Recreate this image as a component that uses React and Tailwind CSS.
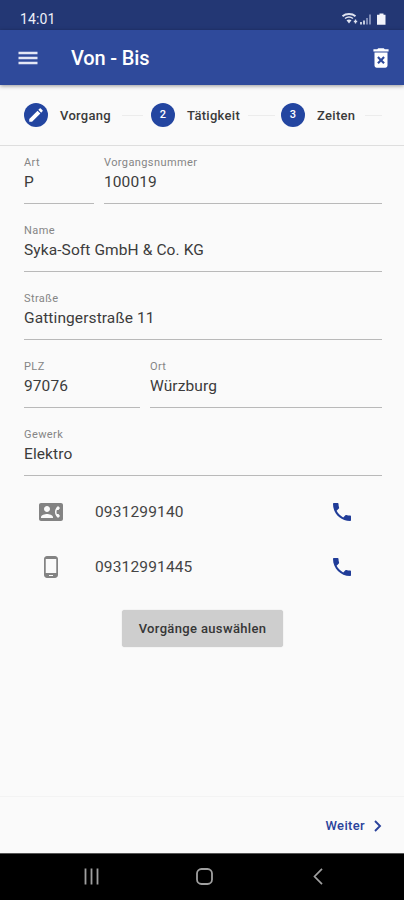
import React from "react";
import {
  MdDeleteForever,
  MdEdit,
  MdContactPhone,
  MdPhoneAndroid,
  MdPhone,
} from "react-icons/md";

function StatusBar() {
  return (
    <div className="flex h-[30px] items-center justify-between bg-[#233774] pl-5 pr-[17px] pt-[7px] text-white">
      <span className="text-[14px] leading-4 tracking-[0.1px] text-[#eef0f8]">14:01</span>
      <svg width="46" height="14" viewBox="0 0 46 14" fill="none">
        <path d="M1.500 4.200C5 1.200 11 1.200 14.500 4.200" stroke="#dfe3f0" strokeWidth="1.900" />
        <path d="M4 6.500C6.400 4.600 9.600 4.600 12 6.500" stroke="#dfe3f0" strokeWidth="1.500" />
        <path d="M5.500 8.200C7 7.200 9 7.200 10.500 8.200L8 11.500Z" fill="#dfe3f0" />
        <path d="M14.500 7.500v4M12.800 9.500h3.400" stroke="#dfe3f0" strokeWidth="1.300" />
        <path d="M20 12.500v-2.500M23 12.500V8.500" stroke="#dfe3f0" strokeWidth="1.700" />
        <path d="M26 12.500V6M29 12.500V2.500" stroke="#8d99c1" strokeWidth="1.700" />
        <path d="M38.500 1.500h4v1.200h2v10h-8.500v-10h2.500z" fill="#f3f5fc" />
      </svg>
    </div>
  );
}

function Step({ badge, label, className }) {
  return (
    <div className={`flex items-center ${className}`}>
      <span className="flex size-6 shrink-0 items-center justify-center rounded-full bg-[#2345a0] text-[11px] font-medium text-white">
        {badge}
      </span>
      <span className="ml-3 mt-px whitespace-nowrap text-[13px] font-medium tracking-[0.3px] text-[#3a3a3a]">{label}</span>
    </div>
  );
}

function Field({ label, value, className = "w-full" }) {
  return (
    <div className={`h-[50px] border-b border-[#b9b9b9] pt-px ${className}`}>
      <div className="h-[17px] text-[11px] leading-[16px] tracking-[0.4px] text-[#858585]">{label}</div>
      <div className="whitespace-nowrap text-[15.500px] leading-[21px] tracking-[0.1px] text-[#3c3c3c]">{value}</div>
    </div>
  );
}

function ContactRow({ icon, number }) {
  return (
    <div className="flex h-[55px] items-center pl-[15px] pr-[28px]">
      <span className="text-[#838383]">{icon}</span>
      <span className="ml-8 flex-1 pt-px text-[15.500px] tracking-[0.15px] text-[#444]">{number}</span>
      <MdPhone size={24} className="text-[#203c98]" />
    </div>
  );
}

export default function App() {
  return (
    <div className="flex h-[900px] w-[404px] flex-col overflow-hidden bg-[#fafafa] font-['Roboto',sans-serif]">
      <StatusBar />
      <header className="z-10 flex h-[55px] shrink-0 items-center bg-[#2f4a9b] pl-[18px] pr-[10px] text-white shadow-[0_1px_4px_rgba(0,0,0,0.4)]">
        <svg width="20" height="14" viewBox="0 0 20 14" stroke="#e4e7f5" strokeWidth="2.500">
          <path d="M.5 2h19M.5 7h19M.5 12h19" />
        </svg>
        <h1 className="ml-[33px] flex-1 text-[20px] font-medium leading-6 tracking-[-0.15px]">Von - Bis</h1>
        <MdDeleteForever size={26} />
      </header>

      <nav className="flex h-[61px] shrink-0 items-center border-b border-[#dedede] pl-6 pr-5">
        <Step badge={<MdEdit size={18} />} label="Vorgang" className="w-[98px]" />
        <span className="h-px w-[21px] bg-[#ececec]" />
        <Step badge="2" label="Tätigkeit" className="ml-2 w-[97px]" />
        <span className="h-px w-[27px] bg-[#ececec]" />
        <Step badge="3" label="Zeiten" className="ml-[6px] w-[84px]" />
        <span className="h-px w-[17px] bg-[#ececec]" />
      </nav>

      <main className="flex flex-1 flex-col pl-6 pr-[22px] pt-2">
        <div className="flex flex-col gap-[17.900px]">
          <div className="flex gap-[10px]">
            <Field label="Art" value="P" className="w-[70px]" />
            <Field label="Vorgangsnummer" value="100019" className="flex-1" />
          </div>
          <Field label="Name" value="Syka-Soft GmbH & Co. KG" />
          <Field label="Straße" value="Gattingerstraße 11" />
          <div className="flex gap-[10px]">
            <Field label="PLZ" value="97076" className="w-[116px]" />
            <Field label="Ort" value="Würzburg" className="flex-1" />
          </div>
          <Field label="Gewerk" value="Elektro" />
        </div>
        <div className="mt-[8.900px]">
          <ContactRow icon={<MdContactPhone size={24} />} number="0931299140" />
          <ContactRow icon={<MdPhoneAndroid size={24} />} number="09312991445" />
        </div>
        <button className="ml-[98px] mt-4 h-[37px] w-[161px] rounded-[3px] bg-[#cecece] pb-px text-[13px] font-medium tracking-[0.35px] text-[#363636] shadow-[0_0_1px_rgba(0,0,0,0.25)]">
          Vorgänge auswählen
        </button>
      </main>

      <footer className="flex h-[57px] shrink-0 items-center justify-end border-t border-[#f3f3f3] pr-[22px] pt-px text-[#2a429b]">
        <span className="text-[13px] font-medium tracking-[0.35px]">Weiter</span>
        <svg className="ml-[9px]" width="8" height="12" viewBox="0 0 8 12" fill="none" stroke="currentColor" strokeWidth="1.900">
          <path d="M1 1l5 5-5 5" />
        </svg>
      </footer>

      <div className="flex h-[47px] shrink-0 items-center border-t border-[#555] bg-black pb-px pl-[83px] text-[#a0a0a0]">
        <svg width="17" height="17" viewBox="0 0 17 17" stroke="currentColor" strokeWidth="1.800">
          <path d="M2.500 .5v16M8.500 .5v16M14.500 .5v16" />
        </svg>
        <svg className="ml-[96px]" width="17" height="17" viewBox="0 0 17 17" fill="none" stroke="currentColor" strokeWidth="1.800">
          <rect x="1" y="1" width="15" height="15" rx="4.500" />
        </svg>
        <svg className="ml-[100px]" width="10" height="17" viewBox="0 0 10 17" fill="none" stroke="currentColor" strokeWidth="1.700">
          <path d="M9 .8L1.500 8.500 9 16.200" />
        </svg>
      </div>
    </div>
  );
}
